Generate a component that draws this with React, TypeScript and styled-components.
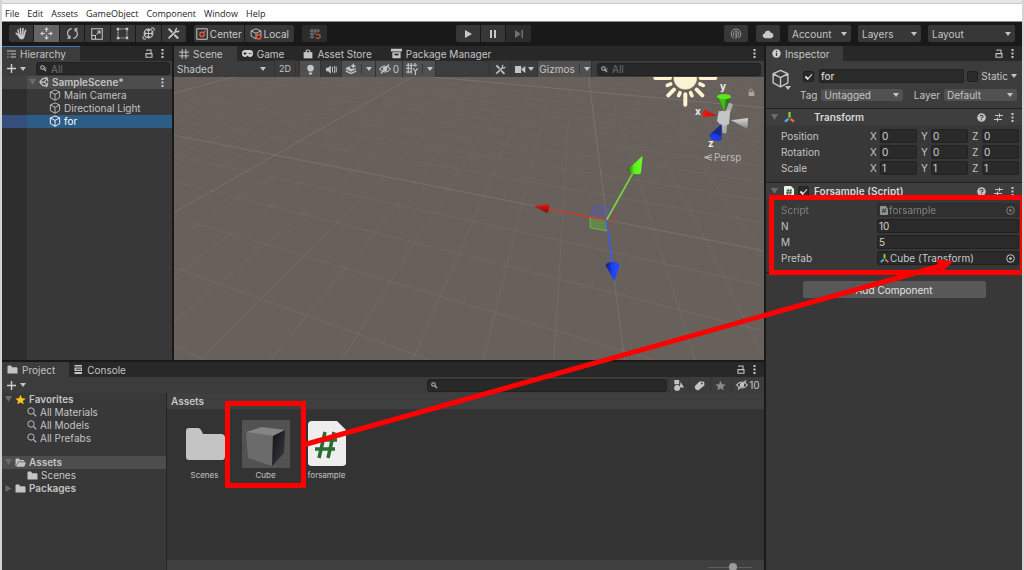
import React from 'react';
import styled, { createGlobalStyle, css } from 'styled-components';

const GlobalStyle = createGlobalStyle`
  *, *::before, *::after { box-sizing: border-box; }
  body { margin: 0; background: #191919; }
  button, input, select { font: inherit; color: inherit; margin: 0; padding: 0; border: 0; background: none; border-radius: 0; }
  svg { display: block; flex: none; }
`;

/* ---------- window shell ---------- */

const Shell = styled.div`
  position: relative;
  display: flex;
  flex-direction: column;
  height: 100vh;
  min-height: 420px;
  overflow: hidden;
  border: solid #d4d4d4;
  border-width: 0 2px;
  background: #191919;
  color: #c4c4c4;
  font: 10px/12px Inter, "Liberation Sans", sans-serif;
`;

const TitleEdge = styled.div`
  flex: none;
  height: 4px;
  background: #e6e6e6;
  border-bottom: 1px solid #cccccc;
`;

const MenuBar = styled.nav`
  flex: none;
  display: flex;
  align-items: center;
  gap: 8px;
  height: 18px;
  padding: 2px 3px 0;
  background: #ffffff;
  border-bottom: 1px solid #8c8c8c;
  color: #1c1c1c;
  font: 9px/14px "Open Sans", "Noto Sans", sans-serif;
`;

const MainBar = styled.header`
  flex: none;
  display: grid;
  grid-template-columns: auto 2fr auto 3fr auto;
  align-items: center;
  height: 24px;
  padding: 0 7px 1px;
  background: #191919;
`;

const BarSide = styled.div`
  display: flex;
  gap: 8px;
`;

const ButtonGroup = styled.div<{ $width: number }>`
  display: flex;
  gap: 1px;
  width: ${p => p.$width}px;
  height: 17px;
  border-radius: 2px;
  overflow: hidden;
`;

const BarButton = styled.button<{ $on?: boolean; $dim?: boolean }>`
  flex: 1;
  display: flex;
  align-items: center;
  justify-content: center;
  gap: 2px;
  background: ${p => (p.$on ? '#656565' : p.$dim ? '#2c2c2c' : '#373737')};
  color: ${p => (p.$dim ? '#707070' : '#c8c8c8')};
`;

const Workspace = styled.main`
  flex: 1;
  min-height: 0;
  display: grid;
  grid-template-columns: minmax(0, 1fr) 256px;
  gap: 2px;
`;

const LeftArea = styled.div`
  display: grid;
  grid-template-rows: minmax(0, 157fr) minmax(0, 104fr);
  gap: 2px;
  min-height: 0;
`;

const TopArea = styled.div`
  display: grid;
  grid-template-columns: 170px minmax(0, 1fr);
  gap: 2px;
  min-height: 0;
`;

/* ---------- panels ---------- */

const Panel = styled.section`
  display: flex;
  flex-direction: column;
  min-width: 0;
  min-height: 0;
  overflow: hidden;
  background: #383838;
`;

const TabStrip = styled.div`
  flex: none;
  display: flex;
  height: 15px;
  background: #282828;
`;

const Tab = styled.button<{ $active?: boolean; $focused?: boolean }>`
  display: flex;
  align-items: center;
  gap: 4px;
  padding: 0 14px 0 5px;
  white-space: nowrap;
  background: ${p => (p.$active ? '#3c3c3c' : 'transparent')};
  ${p => p.$focused && css`box-shadow: inset 0 1px #3a79bb;`}
`;

const TabTools = styled.div`
  display: flex;
  align-items: center;
  gap: 8px;
  margin-left: auto;
  padding-right: 8px;
`;

const IconButton = styled.button`
  display: flex;
  align-items: center;
  justify-content: center;
`;

const PanelBar = styled.div<{ $height: number }>`
  flex: none;
  display: flex;
  align-items: center;
  gap: 1px;
  height: ${p => p.$height}px;
  background: #3c3c3c;
`;

const AddMenu = styled.button`
  display: flex;
  align-items: center;
  gap: 4px;
  padding-left: 5px;
`;

const Search = styled.label<{ $left?: number; $right?: number }>`
  flex: 1;
  min-width: 0;
  display: flex;
  align-items: center;
  gap: 4px;
  height: 13px;
  margin: 0 ${p => p.$right ?? 3}px 0 ${p => p.$left ?? 0}px;
  padding-left: 3px;
  background: #282828;
  border: 1px solid #212121;
  border-radius: 3px;
  input { flex: 1; min-width: 0; height: 11px; outline: 0; }
  input::placeholder { color: #6c6c6c; opacity: 1; }
`;

/* ---------- icons ---------- */

type IconProps = { size?: number; children: React.ReactNode };
const Icon = ({ size = 12, children }: IconProps) => (
  <svg width={size} height={size} viewBox="0 0 16 16" fill="none" stroke="currentColor" strokeWidth="1.4" aria-hidden="true">{children}</svg>
);

const Caret = () => (
  <svg width="6" height="4" viewBox="0 0 6 4" aria-hidden="true"><path d="M0 0h6L3 4z" fill="#c4c4c4" /></svg>
);
const Plus = () => <svg width="9" height="9" viewBox="0 0 9 9" aria-hidden="true"><path d="M4.5 0v9M0 4.5h9" stroke="#d0d0d0" strokeWidth="1.4" /></svg>;
const Dots = () => <svg width="3" height="9" viewBox="0 0 3 9" fill="#c8c8c8" aria-hidden="true"><path d="M.5 0h2v2h-2zM.5 3.5h2v2h-2zM.5 7h2v2h-2z" /></svg>;
const Lock = () => (
  <svg width="8" height="9" viewBox="0 0 8 9" fill="none" stroke="#c4c4c4" strokeWidth="1.1" aria-hidden="true">
    <path d="M1 4.6h6v3.6H1zM2 1.9V1h4v3.6" />
  </svg>
);
const Magnifier = ({ menu }: { menu?: boolean }) => (
  <svg width="7" height="7" viewBox="0 0 8 8" fill="none" stroke="#b4b4b4" aria-hidden="true">
    <circle cx="2.8" cy="2.8" r="2" strokeWidth="1.2" /><path d="M4.3 4.3 7 7" strokeWidth="1.5" />
    {menu && <path d="M5.4 3.2h2.6L6.7 4.6z" fill="#b4b4b4" stroke="none" />}
  </svg>
);
const CubeIcon = ({ size = 12 }: { size?: number }) => (
  <Icon size={size}><path d="M8 1.2 14.2 4v7.6L8 15 1.8 11.6V4zM1.8 4 8 7.2 14.2 4M8 7.2V15" strokeLinejoin="round" strokeWidth="1.2" /></Icon>
);
const FoldDown = () => <svg width="7" height="6" viewBox="0 0 7 6" aria-hidden="true"><path d="M0 0h7L3.5 6z" fill="#6b6b6b" /></svg>;
const FoldRight = () => <svg width="7" height="7" viewBox="0 0 7 7" aria-hidden="true"><path d="M.5 0v7L6.5 3.5z" fill="#6b6b6b" /></svg>;
const FolderIcon = ({ open }: { open?: boolean }) => (
  <svg width="11" height="9" viewBox="0 0 11 9" fill="#c4c4c4" aria-hidden="true">
    {open
      ? <><path d="M.5 8V1.5q0-1 1-1H4L5 2h4.2v1.5H3L1 8z" /><path d="M3.3 4.2H11L9.2 8.7H1.3z" /></>
      : <path d="M.5 1.5q0-1 1-1H4L5.2 2.2h4.3q1 0 1 1v5.3H.5z" />}
  </svg>
);
const StarShape = 'm8 1 2.2 5 5.3.5-4 3.600L12.700 15 8 12.300 3.300 15l1.200-4.900-4-3.600L5.800 6z';
const FindIcon = () => <svg width="10" height="10" viewBox="0 0 10 10" fill="none" stroke="#b8b8b8" strokeWidth="1" aria-hidden="true"><circle cx="4" cy="4" r="3.2" /><path d="m6.4 6.4 2.8 2.8" strokeWidth="1.3" /></svg>;
const HiddenEye = () => (
  <svg width="12" height="10" viewBox="0 0 12 10" fill="none" stroke="#c4c4c4" strokeWidth="1.2" aria-hidden="true">
    <path d="M.6 5Q3 2 6 2t5.4 3Q9 8 6 8T.6 5z" /><circle cx="6" cy="5" r="1.6" fill="#c4c4c4" /><path d="M2 9.5 10 .5" />
  </svg>
);
const UnityIcon = () => (
  <Icon size={10}>
    <path d="M1 8 6.5 2.5M1 8l5.5 5.5M1 8h8M6.5 2.5 12.5 1l1.7 6M6.500 13.500l6 1.500 1.700-6M9 8l4-6M9 8l4 6" strokeWidth="2" />
  </Icon>
);
const AxesIcon = ({ size = 12 }: { size?: number }) => (
  <svg width={size} height={size} viewBox="0 0 12 12" fill="none" strokeWidth="2.4" aria-hidden="true">
    <path d="M6 0v6.2" stroke="#8fd639" /><path d="M5 7.4 1 10.6" stroke="#46b4ee" /><path d="m7 7.4 4 3.2" stroke="#f4693b" />
  </svg>
);
const ScriptIcon = ({ dim }: { dim?: boolean }) => (
  <svg width={dim ? 8 : 10} height={dim ? 9 : 11} viewBox="0 0 10 11" aria-hidden="true">
    <path d="M0 1q0-1 1-1h6l3 3v7q0 1-1 1H1q-1 0-1-1z" fill="#eee" />
    <path d="M4.4 2.8 3.4 8.8M7 2.8 6 8.8M2.3 4.8h5.8M2 6.9h5.8" stroke="#2b6a33" strokeWidth="1.1" />
  </svg>
);
const HelpIcon = () => (
  <svg width="9" height="9" viewBox="0 0 9 9" aria-hidden="true"><circle cx="4.5" cy="4.5" r="4.3" fill="#c4c4c4" /><path d="M3 3.5q0-1.3 1.5-1.3T6 3.5q0 .8-1.5 1.4v.6M4.5 6.2v1.1" stroke="#3e3e3e" strokeWidth="1.1" fill="none" /></svg>
);
const PresetIcon = () => (
  <svg width="9" height="9" viewBox="0 0 9 9" stroke="#c4c4c4" fill="none" aria-hidden="true"><path d="M1 2.5h4M6 2.5h3M0 6.500h3M4 6.500h4M5.500.5v4M3.500 4.500v4" strokeWidth="1.100" /></svg>
);
const PickIcon = () => <svg width="9" height="9" viewBox="0 0 9 9" fill="none" stroke="currentColor" aria-hidden="true"><circle cx="4.5" cy="4.5" r="3.8" strokeWidth="1" /><circle cx="4.5" cy="4.5" r="1.300" fill="currentColor" stroke="none" /></svg>;

const HandIcon = () => (
  <Icon size={13}><g strokeLinecap="round" strokeWidth="1.9"><path d="M5 9 3.7 3.8M7.2 8 6.6 2M9.5 8l.4-6M11.5 9 13 4M4.5 10.5 1.5 7.8" /></g><path d="M3.5 9h9L11.5 12.5 10 15H6.5L4 12z" fill="currentColor" stroke="none" /></Icon>
);
const MoveIcon = () => (
  <Icon size={13}><path d="M8 2.5v3.8M8 9.7v3.8M2.5 8h3.8M9.7 8h3.8" strokeWidth="1.5" /><path d="M8 0 10.8 3.6H5.2zM8 16l2.8-3.600H5.200zM0 8l3.600-2.800v5.600zM16 8l-3.600-2.800v5.600z" fill="currentColor" stroke="none" /></Icon>
);
const RotateIcon = () => (
  <Icon size={13}><path d="M7 2Q2 3 2 8q0 3 2.500 5.500M9 14q5-1 5-6 0-3-2.500-5.500M1.500 13.800h3.300v-3.300M14.500 2.200h-3.300v3.300" /></Icon>
);
const ScaleIcon = () => (
  <Icon size={12}><path d="M1 1h14v14H1zM1 10h5v5M7.5 8.5 12 4M8.5 4H12v3.5" /></Icon>
);
const RectIcon = () => (
  <Icon size={13}><path d="M2.5 2.5h11v11h-11z" strokeDasharray="1.5 1.25" /><path d="M1 1h3v3H1zM12 1h3v3h-3zM1 12h3v3H1zM12 12h3v3h-3z" fill="currentColor" stroke="none" /></Icon>
);
const TransformIcon = () => (
  <Icon size={13}><circle cx="8" cy="8" r="5.4" /><path d="M8 3.5v9M3.5 8h9M6.5 5 8 3.2 9.5 5M6.5 11 8 12.8 9.5 11M5 6.5 3.2 8 5 9.5M11 6.5 12.8 8 11 9.5M11 1.2l3.8.2.1 3.6M1.3 11l.1 3.700 3.600.2" strokeWidth="1.200" /></Icon>
);
const ToolsIcon = ({ size = 13 }: { size?: number }) => (
  <Icon size={size}><path d="m2 2 4.5 4.8M9 9.5l4.800 4.700" strokeWidth="2.500" /><path d="M2 14 11 5" strokeWidth="2.200" /><path d="M14.800 4.500q-1 2-3.600 1.200Q10 3 12 1.200" strokeWidth="1.700" /></Icon>
);
const PivotIcon = () => (
  <Icon size={12}><path d="M1 1h14v14H1z" strokeWidth="1.3" /><circle cx="8" cy="8.5" r="2.8" stroke="#dc5f3b" strokeWidth="1.8" /><path d="m10 6.5 2.5-3" stroke="#dc5f3b" strokeWidth="1.6" /></Icon>
);
const LocalIcon = () => (
  <Icon size={12}><path d="M8 1 14.5 4v7L8 14.5 1.5 11V4zM1.5 4 8 7l6.5-3M8 7v7" strokeWidth="1.2" /><circle cx="11.5" cy="11.5" r="3" stroke="#dc5f3b" strokeWidth="2" fill="#373737" /></Icon>
);
const SnapIcon = () => (
  <Icon size={12}><path d="M4 1v13M8 1v7M12 1v5M1 4h13M1 8h7M1 12h6" stroke="#8a8a8a" strokeDasharray="2.5 1.2" /><path d="M9 8.5h3.3a2.600 2.600 0 0 1 0 5.200H9" stroke="#b5522f" strokeWidth="2" /></Icon>
);
const PlasticIcon = () => (
  <Icon size={12}><path d="M8 14.5V8.5M5 13.7A6.5 6.5 0 1 1 11 13.7M5.8 11A3.7 3.7 0 1 1 8 11.700M8 8.800a1.200 1.200 0 1 0-1-1" strokeWidth="1.200" stroke="#a8a8a8" /></Icon>
);
const CloudIcon = () => (
  <Icon size={12}><path d="M4 13.5a3.3 3.3 0 0 1-.5-6.5 4.2 4.2 0 0 1 8-1 3.8 3.8 0 0 1 .8 7.5z" fill="currentColor" stroke="none" /></Icon>
);

/* ---------- dropdowns and form parts ---------- */

const SelectBox = styled.span<{ $width: number; $tone: string }>`
  flex: none;
  display: grid;
  align-items: center;
  width: ${p => p.$width}px;
  height: 100%;
  background: ${p => p.$tone};
  border-radius: 2px;
  select { grid-area: 1 / 1; width: 100%; height: 100%; padding-left: 3px; appearance: none; outline: 0; }
  svg { grid-area: 1 / 1; justify-self: end; margin-right: 4px; pointer-events: none; }
`;

const BarSelectRow = styled.div`
  display: flex;
  gap: 7px;
  height: 17px;
  select { padding-left: 4px; }
`;

type SelectProps = { name: string; value: string; width: number; tone: string; id?: string };
const Select = ({ name, value, width, tone, id }: SelectProps) => (
  <SelectBox $width={width} $tone={tone}>
    <select aria-label={name} id={id}><option>{value}</option></select>
    <Caret />
  </SelectBox>
);

const Field = styled.input`
  flex: 1;
  min-width: 0;
  width: 0;
  height: 14px;
  padding-left: 1px;
  background: #2a2a2a;
  border: 1px solid #212121;
  border-radius: 2px;
  outline: 0;
  color: #d2d2d2;
`;

const Check = styled.input.attrs({ type: 'checkbox' })`
  flex: none;
  display: grid;
  place-items: center;
  appearance: none;
  width: 11px;
  height: 11px;
  background: #2a2a2a;
  border: 1px solid #212121;
  border-radius: 2px;
  &:checked::after {
    content: "";
    width: 7px;
    height: 4px;
    border: solid #e0e0e0;
    border-width: 0 0 1px 2px;
    transform: rotate(-48deg);
  }
`;

/* ---------- hierarchy ---------- */

const HierarchyBody = styled.div`
  flex: 1;
  background: linear-gradient(90deg, #2e2e2e 25px, #383838 25px);
`;

const HierarchyRow = styled.div<{ $kind?: 'scene' | 'selected' }>`
  display: flex;
  align-items: center;
  gap: 3px;
  height: 13px;
  padding: 0 8px 1px ${p => (p.$kind === 'scene' ? 27 : 47)}px;
  ${p => p.$kind === 'scene' && css`background: linear-gradient(90deg, #404040 25px, #4d4d4d 25px); font-weight: 600;`}
  ${p => p.$kind === 'selected' && css`background: linear-gradient(90deg, #35507f 25px, #2c5d87 25px); color: #fff;`}
  button { margin-left: auto; }
`;

const Hierarchy = () => (
  <Panel>
    <TabStrip>
      <Tab $active $focused>
        <svg width="9" height="8" viewBox="0 0 9 8" stroke="#c4c4c4" aria-hidden="true"><path d="M0 1h9M3.5 4H9M3.5 7H9M1 3.3v1.4M1 6.3v1.4" fill="none" /></svg>
        Hierarchy
      </Tab>
      <TabTools><IconButton aria-label="Lock"><Lock /></IconButton><IconButton aria-label="More"><Dots /></IconButton></TabTools>
    </TabStrip>
    <PanelBar $height={15}>
      <AddMenu aria-label="Create"><Plus /><Caret /></AddMenu>
      <Search $left={9} $right={2}><Magnifier menu /><input placeholder="All" aria-label="Search hierarchy" /></Search>
    </PanelBar>
    <HierarchyBody>
      <HierarchyRow $kind="scene"><FoldDown /><UnityIcon />SampleScene*<IconButton aria-label="Scene menu"><Dots /></IconButton></HierarchyRow>
      <HierarchyRow><CubeIcon />Main Camera</HierarchyRow>
      <HierarchyRow><CubeIcon />Directional Light</HierarchyRow>
      <HierarchyRow $kind="selected"><CubeIcon />for</HierarchyRow>
    </HierarchyBody>
  </Panel>
);

/* ---------- scene view ---------- */

const ToolButton = styled.button<{ $width: number; $on?: boolean }>`
  flex: none;
  display: flex;
  align-items: center;
  justify-content: center;
  gap: 2px;
  width: ${p => p.$width}px;
  height: 100%;
  background: ${p => (p.$on ? '#505050' : '#3c3c3c')};
  outline: 1px solid #323232;
`;

const SmallText = styled.span`
  font-size: 9px;
`;

const SplitCaret = styled.span`
  display: flex;
  align-items: center;
  height: 10px;
  margin-left: 2px;
  padding-left: 4px;
  border-left: 1px solid #383838;
`;

const Gap = styled.span<{ $size?: number }>`
  flex: ${p => (p.$size ? 'none' : '1')};
  width: ${p => p.$size ?? 0}px;
`;

const SceneSearch = styled.div`
  flex: none;
  display: flex;
  width: 167px;
`;

const Viewport = styled.div`
  flex: 1;
  min-height: 0;
  background: #68605b;
  overflow: hidden;
  svg { width: 100%; height: 100%; }
`;

/* Ground plane projection: u runs along the red axis, v towards the viewer. */
const project = (u: number, v: number) => {
  const w = 1 - 0.02697 * u - 0.0867 * v;
  return { x: (275 + 16.81 * u - 50 * v) / w - 174, y: (155 + 0.567 * u + 1.43 * v) / w - 77 };
};
const nearU = (v: number) => (0.94 - 0.0867 * v) / 0.02697;
const nearV = (u: number) => (0.94 - 0.02697 * u) / 0.0867;

type GridLine = { key: string; d: string; major: boolean };
const gridLines: GridLine[] = [];
const addLine = (key: string, a: { x: number; y: number }, b: { x: number; y: number }, major: boolean) =>
  gridLines.push({ key, d: `M${a.x.toFixed(1)} ${a.y.toFixed(1)}L${b.x.toFixed(1)} ${b.y.toFixed(1)}`, major });
for (let u = -14; u <= 26; u++) addLine(`u${u}`, project(u, -24), project(u, nearV(u)), u % 10 === 0);
for (let v = -16; v <= 8; v++) addLine(`v${v}`, project(-30, v), project(nearU(v), v), v % 10 === 0);

const SceneDrawing = () => (
  <svg aria-label="Scene view" role="img">
    <defs>
      <linearGradient id="fade" x1="0" y1="0" x2="0" y2="1"><stop offset="0" stopColor="#fff" stopOpacity=".2" /><stop offset=".5" stopColor="#fff" stopOpacity=".75" /><stop offset="1" stopColor="#fff" /></linearGradient>
      <mask id="depth"><rect width="100%" height="100%" fill="url(#fade)" /></mask>
      <linearGradient id="green"><stop offset="0" stopColor="#1f5c0a" /><stop offset=".45" stopColor="#57ef1c" /><stop offset="1" stopColor="#6bff2a" /></linearGradient>
      <linearGradient id="blue"><stop offset="0" stopColor="#0c1a70" /><stop offset=".5" stopColor="#1f41f5" /><stop offset="1" stopColor="#2a4cff" /></linearGradient>
      <linearGradient id="red" x1="0" y1="0" x2="0" y2="1"><stop offset="0" stopColor="#e61a10" /><stop offset="1" stopColor="#7c0f0a" /></linearGradient>
      <linearGradient id="axisRed"><stop offset="0" stopColor="#f5170d" /><stop offset="1" stopColor="#b5120b" /></linearGradient>
      <linearGradient id="gray" x1="0" y1="0" x2="0" y2="1"><stop offset="0" stopColor="#d8d8d8" /><stop offset="1" stopColor="#8a8a8a" /></linearGradient>
    </defs>
    <g mask="url(#depth)" fill="none" stroke="#8a8b88">
      {gridLines.filter(l => !l.major).map(l => <path key={l.key} d={l.d} strokeOpacity=".27" />)}
    </g>
    <g fill="none" stroke="#8a8b88">
      {gridLines.filter(l => l.major).map(l => <path key={l.key} d={l.d} strokeOpacity=".4" />)}
    </g>
    <g transform="translate(336 -7) scale(.3333)">
      <g fill="#fdf3d3" stroke="#fdf3d3" strokeLinecap="round">
        <circle cx="526" cy="23" r="36" stroke="#4b4540" strokeOpacity=".5" strokeWidth="2" />
        <path d="M526 73v31M492 59l-17 17M560 59l17 17M480 24h-44M572 24h44" strokeWidth="12" />
        <path d="m510 68-4 9M542 68l4 9M482 42l-10 4M570 42l10 4" strokeWidth="11" />
      </g>
      <g strokeWidth="2">
        <path d="m256 405 58 11-24 34-50-10z" fill="#5a5ac0" fillOpacity=".35" stroke="#4a55d0" />
        <path d="m290 450 20-36 6 10-2 30-20 28z" fill="#a04030" fillOpacity=".15" stroke="#b8423a" />
        <path d="m240 440 50 10 4 33-53-9z" fill="#62c032" fillOpacity=".4" stroke="#74d23e" />
      </g>
      <path d="m290 450 78-140" stroke="#78d63a" strokeWidth="5" />
      <path d="M290 450 112 416" stroke="#cf372b" strokeWidth="4" />
      <path d="m290 450 17 130" stroke="#3d59e6" strokeWidth="5" />
      <path d="m398 257-47 44q12 13 36 12 7-3 6-6z" fill="url(#green)" />
      <path d="m72 409 45-7q3 12-5 28z" fill="url(#red)" />
      <path d="M287 586q4-10 21-10 19 0 21 11l-16 46z" fill="url(#blue)" />
      <path d="m648 122 8-22q8-4 13 4l-10 28zM634 162l4 28h11l3-28z" fill="#a9abad" />
      <path d="M663 151 714 144 713 172q-4 4-10 0z" fill="url(#gray)" />
      <path d="m626 124 35-3-4 42-22 5-14-15z" fill="#c3c5c8" />
      <path d="M621 80h42l-20 45z" fill="#2f7d12" /><path d="M626 85 643 125 648 85z" fill="#47b51c" />
      <ellipse cx="642" cy="80" rx="21" ry="8" fill="#57e81e" />
      <path d="m622 137-38-18q-9 12-5 22z" fill="url(#axisRed)" />
      <path d="m635 161-37 35 36 14z" fill="#16288c" /><ellipse cx="617" cy="202" rx="19" ry="10" transform="rotate(18 617 202)" fill="#1b3be6" />
      <path d="M716 66h17v12h-17z" fill="#a6a6a6" /><path d="M719 66v-5q5-6 10 0v5" fill="none" stroke="#a6a6a6" strokeWidth="3" />
      <path d="m606 254-22 8 22 9M584 262h22" fill="none" stroke="#bdbdbd" strokeWidth="3" />
    </g>
    <g fill="#ececec" fontWeight="700" fontSize="10">
      <text x="546" y="13">y</text><text x="521" y="38">x</text><text x="534" y="70">z</text>
    </g>
    <text x="540" y="84" fill="#bdbdbd" fontSize="10">Persp</text>
  </svg>
);

const Scene = () => (
  <Panel>
    <TabStrip>
      <Tab $active><Icon size={10}><path d="M5 0v16M11 0v16M0 5h16M0 11h16" strokeWidth="1.6" /></Icon>Scene</Tab>
      <Tab>
        <svg width="11" height="7" viewBox="0 0 11 7" aria-hidden="true"><path d="M3 0h5a3 3 0 0 1 3 3.5A3 3 0 0 1 8 7Q6.5 7 5.5 5.5 4.5 7 3 7A3 3 0 0 1 0 3.5 3 3 0 0 1 3 0z" fill="#d0d0d0" /><path d="M1.5 3.5h3M3 2v3M6.800 3.500h1M8.500 3.500h1" stroke="#282828" /></svg>
        Game
      </Tab>
      <Tab><Icon size={10}><path d="M1 5h14v10H1z" fill="currentColor" stroke="none" /><path d="M5 8V3.5q0-2 3-2t3 2V8" strokeWidth="1.800" /></Icon>Asset Store</Tab>
      <Tab><Icon size={11}><path d="M0 1h16v4H0zM2 6h12v9H2z" fill="currentColor" stroke="none" /><path d="M5 9.5h6" stroke="#282828" strokeWidth="2.5" /></Icon>Package Manager</Tab>
      <TabTools><IconButton aria-label="More"><Dots /></IconButton></TabTools>
    </TabStrip>
    <PanelBar $height={16}>
      <Select name="Draw mode" value="Shaded" width={96} tone="#3c3c3c" />
      <Gap $size={3} />
      <ToolButton $width={20}><SmallText>2D</SmallText></ToolButton>
      <Gap $size={3} />
      <ToolButton $width={20} $on aria-label="Lighting"><Icon size={11}><path d="M8 1a5 5 0 0 1 3 9v1H5v-1a5 5 0 0 1 3-9zM5.5 12.5h5v1.500L9 15.500H7l-1.500-1.500z" fill="currentColor" stroke="none" /></Icon></ToolButton>
      <ToolButton $width={20} aria-label="Audio"><Icon size={11}><path d="M0 5.5h3L7 2v12l-4-3.5H0z" fill="currentColor" stroke="none" /><path d="M9.5 4v8M12 3q2 5 0 10M14.500 3.500q1.500 4.500 0 9" /></Icon></ToolButton>
      <ToolButton $width={33} $on aria-label="Effects"><Icon size={12}><path d="M1 9.500 8 13l7-3.500v2.300L8 15l-7-3.200zM1 6.500l5-2.300 1 2.800 2 1 3-.5 3-.5v1L8 11.500 1 8z" fill="currentColor" stroke="none" /><path d="m11 0 1.200 2.800L15 4l-2.800 1.200L11 8 9.800 5.200 7 4l2.800-1.200z" fill="currentColor" stroke="none" /></Icon><SplitCaret><Caret /></SplitCaret></ToolButton>
      <ToolButton $width={26} $on aria-label="Hidden objects"><HiddenEye />0</ToolButton>
      <ToolButton $width={32} $on aria-label="Grid"><Icon size={12}><path d="M3 0v14M7 0v14M12 0v5M0 3h15M0 7h8M0 12h8M9.5 7l3 4 3-4M12.5 11v5" strokeWidth="1.5" /></Icon><SplitCaret><Caret /></SplitCaret></ToolButton>
      <Gap />
      <ToolButton $width={20} aria-label="Tools"><ToolsIcon size={11} /></ToolButton>
      <ToolButton $width={26} aria-label="Camera"><Icon size={11}><path d="M0 3h9v10H0zM10 7l5-4v10l-5-4z" fill="currentColor" stroke="none" /></Icon><Caret /></ToolButton>
      <ToolButton $width={53} $on>Gizmos<SplitCaret><Caret /></SplitCaret></ToolButton>
      <Gap $size={4} />
      <SceneSearch><Search><Magnifier menu /><input placeholder="All" aria-label="Search scene" /></Search></SceneSearch>
    </PanelBar>
    <Viewport><SceneDrawing /></Viewport>
  </Panel>
);

/* ---------- project ---------- */

const ProjectBody = styled.div`
  flex: 1;
  min-height: 0;
  display: grid;
  grid-template-columns: 164px minmax(0, 1fr);
  gap: 1px;
  background: #242424;
`;

const Tree = styled.div`
  background: #383838;
`;

const TreeRow = styled.div<{ $depth?: number; $on?: boolean; $space?: boolean }>`
  display: flex;
  align-items: center;
  gap: 3px;
  height: 13px;
  margin-top: ${p => (p.$space ? 11 : 0)}px;
  padding: 0 0 1px ${p => (p.$depth ? 25 : 3)}px;
  font-weight: ${p => (p.$depth ? 400 : 600)};
  background: ${p => (p.$on ? '#4d4d4d' : 'transparent')};
`;

const Browser = styled.div`
  display: flex;
  flex-direction: column;
  min-width: 0;
  background: #333333;
`;

const Crumbs = styled.div`
  flex: none;
  height: 17px;
  padding: 2px 4px;
  background: #3f3f3f;
  border-bottom: 1px solid #363636;
  font-weight: 600;
`;

const AssetGrid = styled.div`
  flex: 1;
  display: flex;
  flex-wrap: wrap;
  align-content: flex-start;
  padding: 10px 7px;
`;

const Asset = styled.figure`
  display: flex;
  flex-direction: column;
  align-items: center;
  gap: 1px;
  width: 61px;
  margin: 0;
  figcaption { font-size: 8px; }
`;

const BrowserFooter = styled.div`
  flex: none;
  display: flex;
  justify-content: flex-end;
  height: 10px;
  padding: 2px 12px 0 0;
  background: #3f3f3f;
  overflow: hidden;
`;

const SizeSlider = styled.input.attrs({ type: 'range' })`
  appearance: none;
  width: 44px;
  height: 10px;
  background: linear-gradient(#5e5e5e, #5e5e5e) center / 100% 1px no-repeat;
  &::-webkit-slider-thumb { appearance: none; width: 8px; height: 8px; border-radius: 4px; background: #9b9b9b; }
`;

const FilterButton = styled.button<{ $width: number }>`
  display: flex;
  align-items: center;
  justify-content: center;
  gap: 1px;
  width: ${p => p.$width}px;
  height: 100%;
  border-left: 1px solid #333;
`;

const ProjectSearch = styled.div`
  display: flex;
  width: 240px;
  margin-left: auto;
`;

const Project = () => (
  <Panel>
    <TabStrip>
      <Tab $active><FolderIcon />Project</Tab>
      <Tab>
        <svg width="9" height="9" viewBox="0 0 9 9" aria-hidden="true"><path d="M.5 0H8v1.5H.5zM.5 2.5H8V6H.5zM.5 7H8v2H.5z" fill="#c4c4c4" /><path d="M2 4.2h5" stroke="#282828" /></svg>
        Console
      </Tab>
      <TabTools><IconButton aria-label="Lock"><Lock /></IconButton><IconButton aria-label="More"><Dots /></IconButton></TabTools>
    </TabStrip>
    <PanelBar $height={16}>
      <AddMenu aria-label="Create"><Plus /><Caret /></AddMenu>
      <ProjectSearch><Search $right={0}><Magnifier /><input aria-label="Search project" /></Search></ProjectSearch>
      <FilterButton $width={20} aria-label="Filter by type"><Icon size={11}><path d="M2 0h7v6H2zM11 3l5 8h-6z" fill="currentColor" stroke="none" /><circle cx="6" cy="11.500" r="4.300" fill="currentColor" stroke="none" /></Icon></FilterButton>
      <FilterButton $width={20} aria-label="Filter by label"><Icon size={11}><path d="M8 2h5.5L15 3.5V8l-8 6.500q-2 1-3.500-.5L1.500 12q-1-2 .5-4z" fill="currentColor" stroke="none" /><circle cx="11.5" cy="5" r="1.3" fill="#3c3c3c" stroke="none" /></Icon></FilterButton>
      <FilterButton $width={20} aria-label="Favorite"><Icon size={11}><path d={StarShape} fill="#8a8a8a" stroke="none" /></Icon></FilterButton>
      <FilterButton $width={33}><HiddenEye />10</FilterButton>
    </PanelBar>
    <ProjectBody>
      <Tree>
        <TreeRow><FoldDown /><Icon size={11}><path d={StarShape} fill="#fcc419" stroke="none" /></Icon>Favorites</TreeRow>
        <TreeRow $depth={1}><FindIcon />All Materials</TreeRow>
        <TreeRow $depth={1}><FindIcon />All Models</TreeRow>
        <TreeRow $depth={1}><FindIcon />All Prefabs</TreeRow>
        <TreeRow $space $on><FoldDown /><FolderIcon open />Assets</TreeRow>
        <TreeRow $depth={1}><FolderIcon />Scenes</TreeRow>
        <TreeRow><FoldRight /><FolderIcon />Packages</TreeRow>
      </Tree>
      <Browser>
        <Crumbs>Assets</Crumbs>
        <AssetGrid>
          <Asset>
            <svg width="48" height="48" viewBox="0 0 48 48" aria-hidden="true"><path d="M5 11q0-3 3-3h9q2 0 3 2l2 4h18q4 0 4 4v18q0 4-3 4H8q-3 0-3-3z" fill="#c4c4c4" /></svg>
            <figcaption>Scenes</figcaption>
          </Asset>
          <Asset>
            <svg width="48" height="48" viewBox="0 0 48 48" aria-hidden="true">
              <defs><linearGradient id="side" x1="0" y1="0" x2="1" y2="1"><stop offset="0" stopColor="#101014" /><stop offset="1" stopColor="#3c3c46" /></linearGradient></defs>
              <rect width="48" height="48" rx="1" fill="#525252" />
              <path d="M4 12 31 16 30 46 6 38z" fill="#6b6b6b" /><path d="M4 12 20 7 43 10 31 16z" fill="#858585" /><path d="M31 16 43 10 42 33 30 46z" fill="url(#side)" />
            </svg>
            <figcaption>Cube</figcaption>
          </Asset>
          <Asset>
            <svg width="48" height="48" viewBox="0 0 48 48" aria-hidden="true">
              <path d="M5 5q0-4 4-4h25l9 9v33q0 3-4 3H9q-4 0-4-3z" fill="#eeeeee" />
              <path d="m22 12-6 26M31 12l-6 26M14 20h20M12 29h20" stroke="#2b6a33" strokeWidth="3.5" />
            </svg>
            <figcaption>forsample</figcaption>
          </Asset>
        </AssetGrid>
        <BrowserFooter><SizeSlider aria-label="Icon size" defaultValue={58} /></BrowserFooter>
      </Browser>
    </ProjectBody>
  </Panel>
);

/* ---------- inspector ---------- */

const ObjectHeader = styled.div`
  display: flex;
  gap: 9px;
  padding: 8px 5px 7px 5px;
  background: #3c3c3c;
`;

const ObjectIcon = styled.button`
  display: flex;
  flex-direction: column;
  align-items: flex-end;
  width: 20px;
  svg:first-child { align-self: flex-start; }
  svg:last-child { margin-top: -2px; }
`;

const HeaderRows = styled.div`
  flex: 1;
  min-width: 0;
  display: flex;
  flex-direction: column;
  gap: 6px;
`;

const NameRow = styled.div`
  display: flex;
  align-items: center;
  gap: 3px;
  height: 14px;
  padding-left: 3px;
  ${Field} { margin-left: 2px; font-weight: 500; }
`;

const TagRow = styled.div`
  display: flex;
  align-items: center;
  justify-content: space-between;
  height: 12px;
  div { display: flex; align-items: center; gap: 4px; height: 12px; }
`;

const ComponentBar = styled.div`
  display: flex;
  align-items: center;
  height: 17px;
  padding: 0 8px 0 5px;
  background: #3e3e3e;
  border-top: 1px solid #1f1f1f;
`;

const ComponentIcon = styled.span`
  display: flex;
  align-items: center;
  gap: 4px;
  width: 36px;
  padding-left: 6px;
`;

const ComponentTitle = styled.h2`
  flex: 1;
  margin: 0;
  font-size: 10px;
  font-weight: 600;
  color: #d8d8d8;
`;

const ComponentTools = styled.div`
  display: flex;
  align-items: center;
  gap: 8px;
`;

const Properties = styled.div`
  padding: 3px 3px 6px 15px;
`;

const PropertyRow = styled.div<{ $dim?: boolean }>`
  display: flex;
  align-items: center;
  height: 16px;
  opacity: ${p => (p.$dim ? 0.5 : 1)};
`;

const PropertyName = styled.label<{ $width: number }>`
  flex: none;
  width: ${p => p.$width}px;
`;

const Axes = styled.div`
  flex: 1;
  min-width: 0;
  display: flex;
  gap: 4px;
  label { flex: 1; min-width: 0; display: flex; align-items: center; }
  span { flex: none; width: 10px; }
`;

const ObjectField = styled.button`
  flex: 1;
  display: flex;
  align-items: center;
  gap: 1px;
  height: 14px;
  padding: 0 3px 0 2px;
  background: #2a2a2a;
  border: 1px solid #212121;
  border-radius: 2px;
  color: #c8c8c8;
  svg:last-child { margin-left: auto; }
`;

const AddComponent = styled.button`
  display: block;
  width: 183px;
  height: 17px;
  margin: 8px auto;
  background: #585858;
  border-radius: 2px;
  color: #e4e4e4;
`;

const Divider = styled.div`
  height: 1px;
  background: #1f1f1f;
`;

const Vector = ({ name, value }: { name: string; value: string }) => (
  <PropertyRow>
    <PropertyName as="span" $width={89}>{name}</PropertyName>
    <Axes>
      {['X', 'Y', 'Z'].map(axis => (
        <label key={axis}><span>{axis}</span><Field defaultValue={value} aria-label={`${name} ${axis}`} /></label>
      ))}
    </Axes>
  </PropertyRow>
);

const Tools = () => (
  <ComponentTools>
    <IconButton aria-label="Help"><HelpIcon /></IconButton>
    <IconButton aria-label="Presets"><PresetIcon /></IconButton>
    <IconButton aria-label="More"><Dots /></IconButton>
  </ComponentTools>
);

const Inspector = () => (
  <Panel>
    <TabStrip>
      <Tab $active>
        <svg width="10" height="9" viewBox="0 0 10 9" aria-hidden="true"><circle cx="5.500" cy="4.5" r="4.2" fill="#d0d0d0" /><path d="M5.500 1.8v1.4M5.500 4v3" stroke="#3c3c3c" strokeWidth="1.3" /></svg>
        Inspector
      </Tab>
      <TabTools><IconButton aria-label="Lock"><Lock /></IconButton><IconButton aria-label="More"><Dots /></IconButton></TabTools>
    </TabStrip>
    <ObjectHeader>
      <ObjectIcon aria-label="Object icon"><CubeIcon size={19} /><Caret /></ObjectIcon>
      <HeaderRows>
        <NameRow>
          <Check defaultChecked aria-label="Active" />
          <Field defaultValue="for" aria-label="Object name" />
          <Check id="static" />
          <label htmlFor="static">Static</label>
          <IconButton aria-label="Static options"><Caret /></IconButton>
        </NameRow>
        <TagRow>
          <div><label htmlFor="tag">Tag</label><Select id="tag" name="Tag" value="Untagged" width={82} tone="#515151" /></div>
          <div><label htmlFor="layer">Layer</label><Select id="layer" name="Layer" value="Default" width={73} tone="#515151" /></div>
        </TagRow>
      </HeaderRows>
    </ObjectHeader>
    <ComponentBar>
      <FoldDown /><ComponentIcon><AxesIcon size={11} /></ComponentIcon><ComponentTitle>Transform</ComponentTitle><Tools />
    </ComponentBar>
    <Properties>
      <Vector name="Position" value="0" />
      <Vector name="Rotation" value="0" />
      <Vector name="Scale" value="1" />
    </Properties>
    <ComponentBar>
      <FoldDown />
      <ComponentIcon><ScriptIcon /><Check defaultChecked aria-label="Script enabled" /></ComponentIcon>
      <ComponentTitle>Forsample (Script)</ComponentTitle><Tools />
    </ComponentBar>
    <Properties>
      <PropertyRow $dim><PropertyName $width={96} htmlFor="script">Script</PropertyName><ObjectField id="script"><ScriptIcon dim />forsample<PickIcon /></ObjectField></PropertyRow>
      <PropertyRow><PropertyName $width={96} htmlFor="n">N</PropertyName><Field id="n" defaultValue="10" /></PropertyRow>
      <PropertyRow><PropertyName $width={96} htmlFor="m">M</PropertyName><Field id="m" defaultValue="5" /></PropertyRow>
      <PropertyRow><PropertyName $width={96} htmlFor="prefab">Prefab</PropertyName><ObjectField id="prefab"><AxesIcon size={9} />Cube (Transform)<PickIcon /></ObjectField></PropertyRow>
    </Properties>
    <Divider />
    <AddComponent>Add Component</AddComponent>
  </Panel>
);

/* ---------- drag annotation drawn over the editor ---------- */

const Annotation = styled.svg`
  position: absolute;
  inset: 0 -2px 0 -2px;
  width: calc(100% + 4px);
  height: 100%;
  pointer-events: none;
`;

const menus = ['File', 'Edit', 'Assets', 'GameObject', 'Component', 'Window', 'Help'];

export default function App() {
  return (
    <Shell>
      <GlobalStyle />
      <TitleEdge />
      <MenuBar>{menus.map(m => <button key={m}>{m}</button>)}</MenuBar>
      <MainBar>
        <BarSide>
          <ButtonGroup $width={177}>
            <BarButton aria-label="Hand"><HandIcon /></BarButton>
            <BarButton aria-label="Move" $on><MoveIcon /></BarButton>
            <BarButton aria-label="Rotate"><RotateIcon /></BarButton>
            <BarButton aria-label="Scale"><ScaleIcon /></BarButton>
            <BarButton aria-label="Rect"><RectIcon /></BarButton>
            <BarButton aria-label="Transform"><TransformIcon /></BarButton>
            <BarButton aria-label="Custom tools"><ToolsIcon /></BarButton>
          </ButtonGroup>
          <ButtonGroup $width={100}>
            <BarButton><PivotIcon />Center</BarButton>
            <BarButton><LocalIcon />Local</BarButton>
          </ButtonGroup>
          <ButtonGroup $width={25}><BarButton $dim aria-label="Snap"><SnapIcon /></BarButton></ButtonGroup>
        </BarSide>
        <span />
        <ButtonGroup $width={75}>
          <BarButton aria-label="Play"><svg width="8" height="8" viewBox="0 0 8 8"><path d="M1 0l7 4-7 4z" fill="currentColor" /></svg></BarButton>
          <BarButton aria-label="Pause"><svg width="8" height="8" viewBox="0 0 8 8"><path d="M1 0h2v8H1zM5 0h2v8H5z" fill="currentColor" /></svg></BarButton>
          <BarButton $dim aria-label="Step"><svg width="8" height="8" viewBox="0 0 8 8"><path d="M0 0l6 4-6 4zM6.5 0H8v8H6.5z" fill="currentColor" /></svg></BarButton>
        </ButtonGroup>
        <span />
        <BarSide>
          <ButtonGroup $width={24}><BarButton aria-label="Version control"><PlasticIcon /></BarButton></ButtonGroup>
          <ButtonGroup $width={24}><BarButton aria-label="Cloud"><CloudIcon /></BarButton></ButtonGroup>
          <BarSelectRow>
            <Select name="Account" value="Account" width={63} tone="#373737" />
            <Select name="Layers" value="Layers" width={63} tone="#373737" />
            <Select name="Layout" value="Layout" width={87} tone="#373737" />
          </BarSelectRow>
        </BarSide>
      </MainBar>
      <Workspace>
        <LeftArea>
          <TopArea><Hierarchy /><Scene /></TopArea>
          <Project />
        </LeftArea>
        <Inspector />
      </Workspace>
      <Annotation aria-hidden="true">
        <g fill="none" stroke="#ff0000" strokeWidth="5">
          <rect x="227.5" y="403.5" width="76" height="82" />
          <rect x="771.500" y="197.5" width="251" height="75" />
          <path d="M305 444.5 940 266" />
        </g>
        <path d="M953 261.5 936 259l5.500 13.500z" fill="#ff0000" />
      </Annotation>
    </Shell>
  );
}
